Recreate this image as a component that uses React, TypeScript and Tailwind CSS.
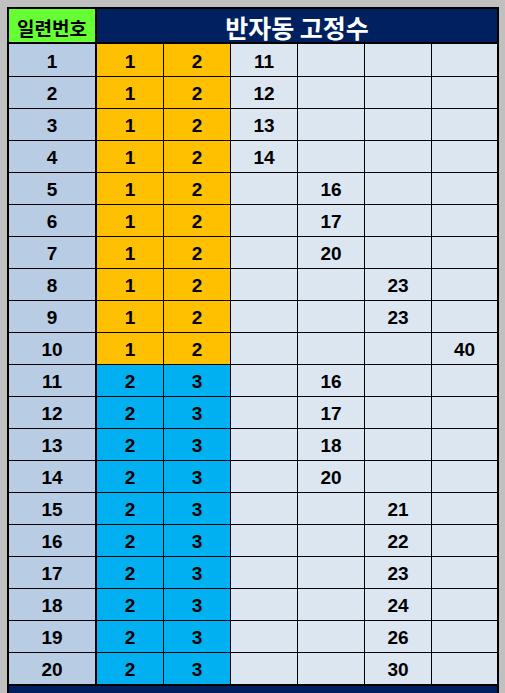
const rows: { a: number; b: number; pick: number; value: number }[] = [
  { a: 1, b: 2, pick: 0, value: 11 },
  { a: 1, b: 2, pick: 0, value: 12 },
  { a: 1, b: 2, pick: 0, value: 13 },
  { a: 1, b: 2, pick: 0, value: 14 },
  { a: 1, b: 2, pick: 1, value: 16 },
  { a: 1, b: 2, pick: 1, value: 17 },
  { a: 1, b: 2, pick: 1, value: 20 },
  { a: 1, b: 2, pick: 2, value: 23 },
  { a: 1, b: 2, pick: 2, value: 23 },
  { a: 1, b: 2, pick: 3, value: 40 },
  { a: 2, b: 3, pick: 1, value: 16 },
  { a: 2, b: 3, pick: 1, value: 17 },
  { a: 2, b: 3, pick: 1, value: 18 },
  { a: 2, b: 3, pick: 1, value: 20 },
  { a: 2, b: 3, pick: 2, value: 21 },
  { a: 2, b: 3, pick: 2, value: 22 },
  { a: 2, b: 3, pick: 2, value: 23 },
  { a: 2, b: 3, pick: 2, value: 24 },
  { a: 2, b: 3, pick: 2, value: 26 },
  { a: 2, b: 3, pick: 2, value: 30 },
];

const numFont = { fontFamily: '"Liberation Sans", Arial, sans-serif' };
const korFont = { fontFamily: '"Noto Sans CJK KR", "Noto Sans", sans-serif' };

export default function App() {
  return (
    <div className="w-[505px] h-[693px] overflow-hidden bg-[#c0c0c0] pt-[7px] pl-[7px]">
      <div className="w-[492px] border-2 border-b-0 border-black">
        {/* header */}
        <div className="flex h-[33px]">
          <div
            className="w-[88px] shrink-0 bg-[#66ff33] flex items-center justify-center pt-[3px] text-[19px] font-bold text-black border-r-2 border-black leading-none"
            style={korFont}
          >
            일련번호
          </div>
          <div
            className="flex-1 bg-[#002060] flex items-center justify-center pt-[3px] text-[25px] font-bold text-white leading-none"
            style={korFont}
          >
            반자동 고정수
          </div>
        </div>

        {/* rows */}
        {rows.map((r, i) => {
          const fixed = r.a === 1 ? 'bg-[#ffc000]' : 'bg-[#00b0f0]';
          return (
            <div
              key={i}
              className={`flex text-[19px] font-bold text-black leading-none ${
                i === 0 ? 'h-[34px] border-t-2' : 'h-[32px] border-t'
              } border-black`}
              style={numFont}
            >
              <div className="w-[88px] shrink-0 bg-[#b8cce4] border-r-2 border-black flex items-center justify-center pt-[2px]">
                {i + 1}
              </div>
              <div className={`w-[67px] shrink-0 ${fixed} border-r border-black flex items-center justify-center pt-[2px]`}>
                {r.a}
              </div>
              <div className={`w-[67px] shrink-0 ${fixed} border-r border-black flex items-center justify-center pt-[2px]`}>
                {r.b}
              </div>
              {[0, 1, 2, 3].map((c) => (
                <div
                  key={c}
                  className={`${
                    c === 3 ? 'flex-1' : 'w-[67px] shrink-0 border-r border-black'
                  } bg-[#dce6f1] flex items-center justify-center pt-[2px]`}
                >
                  {r.pick === c ? r.value : ''}
                </div>
              ))}
            </div>
          );
        })}

        {/* next section header, cut off */}
        <div className="h-[20px] border-t-2 border-black bg-[#002060]" />
      </div>
    </div>
  );
}
